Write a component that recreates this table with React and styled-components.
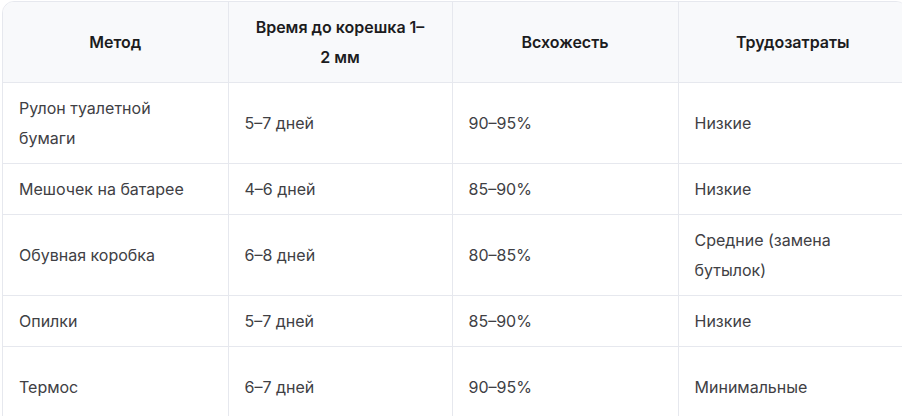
import React from 'react'
import styled, { createGlobalStyle } from 'styled-components'

const GlobalStyle = createGlobalStyle`
  html, body {
    margin: 0;
    padding: 0;
    background: #ffffff;
    overflow: hidden;
  }
`

const Page = styled.div`
  padding: 1px 0 0 2px;
  width: 960px;
  font-family: Inter, "Noto Sans", sans-serif;
`

const Frame = styled.div`
  width: 904px;
  border: 1px solid #e6e8ee;
  border-radius: 12px;
  overflow: hidden;
`

const Table = styled.table`
  width: 100%;
  border-collapse: collapse;
  table-layout: fixed;
`

const HeadCell = styled.th`
  background: #f8f9fb;
  color: #1c1c1e;
  font-size: 16px;
  font-weight: 600;
  line-height: 30px;
  text-align: center;
  padding: 10px 16px;
  border-left: 1px solid #e6e8ee;
  border-bottom: 1px solid #e6e8ee;
  &:first-child {
    border-left: none;
  }
`

const Cell = styled.td`
  color: #404044;
  font-size: 16px;
  font-weight: 400;
  line-height: 30px;
  text-align: left;
  padding: 10px 16px;
  height: ${p => (p.$tall ? '60px' : 'auto')};
  border-left: 1px solid #e6e8ee;
  border-top: 1px solid #e6e8ee;
  &:first-child {
    border-left: none;
  }
`

const cols = [225, 224, 226, 229]

const heads = [
  'Метод',
  <>Время до корешка 1–<br />2 мм</>,
  'Всхожесть',
  'Трудозатраты',
]

const rows = [
  ['Рулон туалетной бумаги', '5–7 дней', '90–95%', 'Низкие'],
  ['Мешочек на батарее', '4–6 дней', '85–90%', 'Низкие'],
  ['Обувная коробка', '6–8 дней', '80–85%', 'Средние (замена бутылок)'],
  ['Опилки', '5–7 дней', '85–90%', 'Низкие'],
  ['Термос', '6–7 дней', '90–95%', 'Минимальные', true],
]

export default function App() {
  return (
    <>
      <GlobalStyle />
      <Page>
        <Frame>
          <Table>
            <colgroup>
              {cols.map((w, i) => (
                <col key={i} style={{ width: w }} />
              ))}
            </colgroup>
            <thead>
              <tr>
                {heads.map((h, i) => (
                  <HeadCell key={i}>{h}</HeadCell>
                ))}
              </tr>
            </thead>
            <tbody>
              {rows.map((r, i) => (
                <tr key={i}>
                  {r.slice(0, 4).map((c, j) => (
                    <Cell key={j} $tall={r[4]}>
                      {c}
                    </Cell>
                  ))}
                </tr>
              ))}
            </tbody>
          </Table>
        </Frame>
      </Page>
    </>
  )
}
